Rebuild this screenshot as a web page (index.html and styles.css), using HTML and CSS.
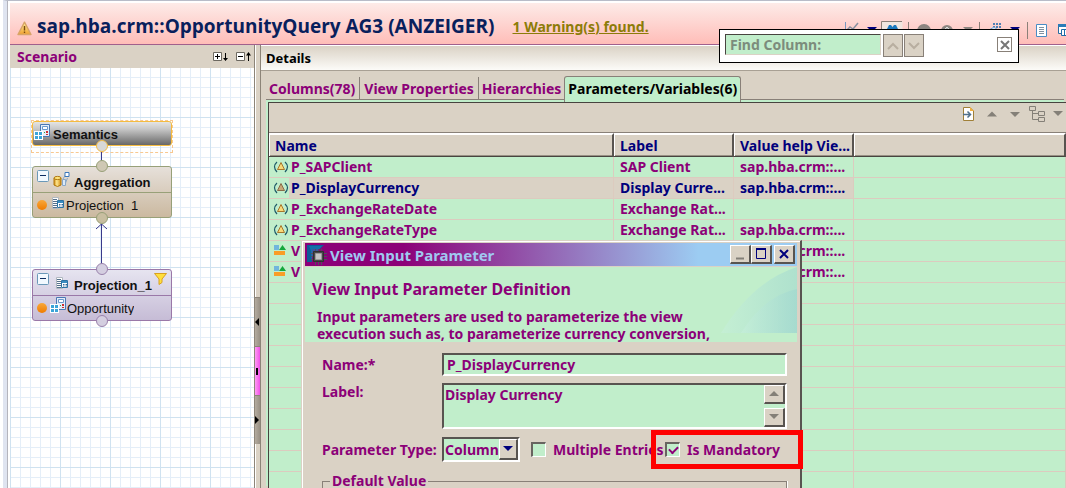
FILE: index.html
```html
<!DOCTYPE html>
<html lang="en">
<head>
  <meta charset="UTF-8">
  <title>sap.hba.crm::OpportunityQuery</title>
  <link rel="stylesheet" href="styles.css">
</head>
<body>
  <!-- shared icons -->
  <svg class="defs" aria-hidden="true">
    <defs>
      <linearGradient id="gold" x1="0" y1="0" x2="0" y2="1">
        <stop offset="0" stop-color="#fff3a0"/>
        <stop offset="1" stop-color="#f0a030"/>
      </linearGradient>
      <linearGradient id="cyl" x1="0" y1="0" x2="1" y2="0">
        <stop offset="0" stop-color="#d08a10"/>
        <stop offset="0.4" stop-color="#ffe890"/>
        <stop offset="1" stop-color="#d08a10"/>
      </linearGradient>
      <symbol id="i-param" viewBox="0 0 16 14">
        <path d="M4 2Q-1 6.500 4 12M12 2Q17 6.500 12 12" fill="none" stroke="#1e5a68" stroke-width="1.200"/>
        <path d="M8 2.500L11.500 9.500H4.500Z" fill="#f8d878" stroke="#a8762a"/>
      </symbol>
      <symbol id="i-param-sel" viewBox="0 0 16 14">
        <path d="M4 2Q-1 6.500 4 12M12 2Q17 6.500 12 12" fill="none" stroke="#1e5a68" stroke-width="1.200"/>
        <path d="M8 2.500L11.500 9.500H4.500Z" fill="#c8a878" stroke="#8a6a48"/>
      </symbol>
      <symbol id="i-var" viewBox="0 0 12 11">
        <path d="M0 0H5V5H0Z" fill="#6fb6dc"/>
        <path d="M8.500 0L12 5H5Z" fill="#14a83c"/>
        <path d="M0 6H11V10H0Z" fill="#f99d27"/>
      </symbol>
      <symbol id="i-cube" viewBox="0 0 16 16">
        <path d="M6.500 .5H15.500V12.500H6.500Z" fill="#e4eefa" stroke="#4a78b4"/>
        <path d="M8.500 2.500H13.500V5.500H8.500Z" fill="#fff" stroke="#6a98cc"/>
        <path d="M10 8h1v1h-1z" fill="#30a040"/>
        <path d="M12 7h2v2h-2zM12 10h2v1h-2z" fill="#d03030"/>
        <path d="M0 7H9V16H0Z" fill="#fff"/>
        <path d="M1 8h3v3h-3zM5 8h3v3h-3zM1 12h3v3h-3zM5 12h3v3h-3z" fill="#3ba4d8"/>
      </symbol>
      <symbol id="i-proj" viewBox="0 0 12 12">
        <path d="M.5 .5H6.500V11.500H.5Z" fill="#fff" stroke="#b0b8c0"/>
        <path d="M1 2.500h4M1 4.500h4M1 6.500h4M1 8.500h4M1 10.500h4" stroke="#56718c"/>
        <path d="M5.500 3.500H11.500V10.500H5.500Z" fill="#fff" stroke="#2c74a4"/>
        <path d="M6 4H11V6H6Z" fill="#3a8cc0"/>
        <path d="M7 7.500h1.500M9.500 7.500h1.500M7 9h1.500M9.500 9h1.500" stroke="#3a6c98"/>
      </symbol>
      <symbol id="i-agg" viewBox="0 0 17 17">
        <path d="M1 7V14Q4.500 17 8 14V7Z" fill="url(#cyl)" stroke="#b07810"/>
        <ellipse cx="4.500" cy="7" rx="3.500" ry="1.600" fill="#ffe47a" stroke="#b07810"/>
        <path d="M9.500 8.500V14.500H12.500V8.500ZM10 8l3-5M12.500 12l2-5" fill="#dbe9f8" stroke="#8aa8c8"/>
        <path d="M12 1.500H16V5.500H12Z" fill="#fff" stroke="#3c78bc"/>
      </symbol>
      <symbol id="i-collapse" viewBox="0 0 12 12">
        <rect x=".5" y=".5" width="11" height="11" rx="1" fill="#f2f9ff" stroke="#6a98b8"/>
        <path d="M3 5.500H9" stroke="#0c2c60"/>
      </symbol>
    </defs>
  </svg>

  <div class="editor">
    <header class="title-bar">
      <svg class="warn" viewBox="0 0 15 15">
        <path d="M7.500 1.200L14 13.500H1Z" fill="url(#gold)" stroke="#d8a468" stroke-linejoin="round" stroke-width="1.400"/>
        <path d="M7.500 5V9.500M7.500 10.500V12" stroke="#7a4a10" stroke-width="1.400"/>
      </svg>
      <h1>sap.hba.crm::OpportunityQuery AG3 (ANZEIGER)</h1>
      <a class="warning-link" href="#">1 Warning(s) found.</a>
      <svg class="tools" width="222" height="20" viewBox="0 0 222 20">
        <path d="M1.500 1V16M1 15.500H15" stroke="#7898c0" fill="none"/>
        <path d="M2 10L6 6L9 8L14 2" stroke="#8890a0" fill="none" stroke-width="1.500"/>
        <path d="M23 6H33L28 11Z" fill="#00007c"/>
        <path d="M37.500 20V-.5H58.500V20" fill="#f1e6df"/>
        <path d="M37.500 20V.5H58" fill="none" stroke="#8c8078"/>
        <path d="M43 16V8L45 4H47L48.500 6L50 4H52L54 8V16H50V9H47V16Z" fill="#1c78bc"/>
        <path d="M64.500 1V18M135.500 1V18M183.500 1V18" stroke="#8c8078"/>
        <circle cx="80" cy="10" r="7" fill="#8c8580"/>
        <circle cx="103" cy="10" r="6" fill="#8c8580"/>
        <path d="M76 9h8M103 6v8M100 9l3-3 3 3" stroke="#ddd" fill="none"/>
        <path d="M119 6H129L124 11Z" fill="#8c8580"/>
        <path d="M149 2h2v2h-2zM152 2h2v2h-2zM155 2h2v2h-2zM149 5h2v2h-2zM152 5h2v2h-2zM155 5h2v2h-2zM155 8h2v2h-2z" fill="#5080b4"/>
        <path d="M145 9l5-3l4 3v6h-9z" stroke="#7aa6d4" fill="#dbe9f8"/>
        <path d="M166 6H176L171 11Z" fill="#00007c"/>
        <path d="M192.500 3.500H202.500V15.500H192.500Z" fill="#fff" stroke="#4a8cc4"/>
        <path d="M195 6.500h5M195 8.500h5M195 10.500h5M195 12.500h5" stroke="#8090a0"/>
        <path d="M214.500 3.500H224V12.500H214.500Z" fill="#fff" stroke="#2a6ca0"/>
        <path d="M214 3H224V6H214Z" fill="#2a7cb8"/>
        <path d="M217.500 8.500h6v6h-6zM220.500 9v5" fill="#fff" stroke="#1c6ca8"/>
      </svg>
    </header>

    <main class="panes">
      <section class="scenario">
        <div class="pane-head">
          <h2>Scenario</h2>
          <svg width="38" height="12" viewBox="0 0 38 12">
            <path d="M.5 1.500H8.500V9.500H.5ZM23.500 1.500H31.500V9.500H23.500Z" fill="#fff" stroke="#6c6860"/>
            <path d="M2 5.500H7M4.500 3V8M25 5.500H30" stroke="#000"/>
            <path d="M12.500 2V9M35.500 3V10" stroke="#000"/>
            <path d="M10 7H15L12.500 10ZM33 4.500H38L35.500 1Z" fill="#000"/>
          </svg>
        </div>
        <div class="canvas">
          <div class="selection"></div>
          <div class="node semantics">
            <div class="node-title"><svg class="ico16"><use href="#i-cube"/></svg>Semantics</div>
          </div>
          <div class="node aggregation">
            <div class="node-title">
              <svg class="collapse"><use href="#i-collapse"/></svg>
              <svg class="ico17"><use href="#i-agg"/></svg>
              <span>Aggregation</span>
            </div>
            <div class="node-row">
              <i class="dot"></i>
              <svg class="ico12"><use href="#i-proj"/></svg>
              <span>Projection_1</span>
            </div>
          </div>
          <div class="node projection">
            <div class="node-title">
              <svg class="collapse"><use href="#i-collapse"/></svg>
              <svg class="ico12"><use href="#i-proj"/></svg>
              <span>Projection_1</span>
              <svg class="filter" viewBox="0 0 13 12">
                <path d="M.5 .5H12.500L8 6V9.500L5 11.500V6Z" fill="#ffdf3c" stroke="#d8a020"/>
              </svg>
            </div>
            <div class="node-row">
              <i class="dot"></i>
              <svg class="ico16"><use href="#i-cube"/></svg>
              <span>Opportunity</span>
            </div>
          </div>
          <svg class="links" width="200" height="280" viewBox="0 0 200 280">
            <path d="M91.500 84V93M91.500 156V196M86 161L91.500 156L97 161" fill="none" stroke="#3a3a8c"/>
            <circle cx="92" cy="78" r="5.500" fill="#d8d8d8" stroke="#f0bc48"/>
            <circle cx="92" cy="98" r="5.500" fill="#cfc8b4" stroke="#98a078"/>
            <circle cx="92" cy="150" r="5.500" fill="#c8bea0" stroke="#98a078"/>
            <circle cx="92" cy="201" r="5.500" fill="#d4cee0" stroke="#9a82ac"/>
            <circle cx="92" cy="253" r="5.500" fill="#d4cee0" stroke="#9a82ac"/>
          </svg>
        </div>
      </section>

      <div class="sash">
        <button class="left" aria-label="Collapse left"></button>
        <button class="mid" aria-label="Reset"></button>
        <button class="right" aria-label="Collapse right"></button>
      </div>

      <section class="details">
        <h2 class="details-head">Details</h2>
        <nav class="tabs">
          <button>Columns(78)</button>
          <button>View Properties</button>
          <button>Hierarchies</button>
          <button class="active">Parameters/Variables(6)</button>
        </nav>
        <div class="tab-body">
          <div class="table-tools">
            <svg width="104" height="18" viewBox="0 0 104 18">
              <path d="M1.500 1.500H8L11.500 5V14.500H1.500Z" fill="#fff" stroke="#a08038"/>
              <path d="M8 1V5H12Z" fill="#f0b040"/>
              <path d="M1 8.500H8M5.500 5.500L8.500 8.500L5.500 11.500" stroke="#50708c" fill="none" stroke-width="1.500"/>
              <path d="M25 10.500H35L30 5.500Z" fill="#848078"/>
              <path d="M48 6H58L53 11Z" fill="#848078"/>
              <path d="M67.500 .5H73.500V4.500H67.500ZM76.500 5.500H82.500V9.500H76.500ZM76.500 11.500H82.500V15.500H76.500ZM70.500 5V13.500H76M70.500 7.500H76" fill="none" stroke="#848078"/>
              <path d="M91 5H101L96 10Z" fill="#848078"/>
            </svg>
          </div>
          <table class="params">
            <colgroup><col class="c-name"><col class="c-label"><col class="c-value"><col></colgroup>
            <thead>
              <tr><th>Name</th><th>Label</th><th>Value help Vie...</th><th></th></tr>
            </thead>
            <tbody>
              <tr><td><svg class="p"><use href="#i-param"/></svg>P_SAPClient</td><td>SAP Client</td><td>sap.hba.crm::...</td><td></td></tr>
              <tr class="selected"><td><svg class="p"><use href="#i-param-sel"/></svg>P_DisplayCurrency</td><td>Display Curre...</td><td>sap.hba.crm::...</td><td></td></tr>
              <tr><td><svg class="p"><use href="#i-param"/></svg>P_ExchangeRateDate</td><td>Exchange Rat...</td><td></td><td></td></tr>
              <tr><td><svg class="p"><use href="#i-param"/></svg>P_ExchangeRateType</td><td>Exchange Rat...</td><td>sap.hba.crm::...</td><td></td></tr>
              <tr><td><svg class="v"><use href="#i-var"/></svg>V</td><td></td><td>sap.hba.crm::...</td><td></td></tr>
              <tr><td><svg class="v"><use href="#i-var"/></svg>V</td><td></td><td>sap.hba.crm::...</td><td></td></tr>
              <tr><td></td><td></td><td></td><td></td></tr>
              <tr><td></td><td></td><td></td><td></td></tr>
              <tr><td></td><td></td><td></td><td></td></tr>
              <tr><td></td><td></td><td></td><td></td></tr>
              <tr><td></td><td></td><td></td><td></td></tr>
              <tr><td></td><td></td><td></td><td></td></tr>
              <tr><td></td><td></td><td></td><td></td></tr>
              <tr><td></td><td></td><td></td><td></td></tr>
              <tr><td></td><td></td><td></td><td></td></tr>
              <tr><td></td><td></td><td></td><td></td></tr>
            </tbody>
          </table>
        </div>
      </section>
    </main>

    <div class="find">
      <input type="text" aria-label="Find column" placeholder="Find Column:">
      <button class="step" aria-label="Previous"><svg width="12" height="8"><path d="M1 7L6 2L11 7" fill="none" stroke="#b8aea0" stroke-width="2"/></svg></button>
      <button class="step" aria-label="Next"><svg width="12" height="8"><path d="M1 1L6 6L11 1" fill="none" stroke="#b8aea0" stroke-width="2"/></svg></button>
      <button class="close" aria-label="Close"><svg width="10" height="10"><path d="M1 1L9 9M9 1L1 9" stroke="#777" stroke-width="2"/></svg></button>
    </div>

    <div class="dialog" role="dialog" aria-labelledby="dlg-title">
      <div class="dlg-bar">
        <svg width="20" height="20" viewBox="0 0 20 20">
          <path d="M0 0H17L13 4H5V17L0 17Z" fill="#0c5c98"/>
          <path d="M2 1H15L4 14V6Z" fill="#1878b0" opacity=".7"/>
          <path d="M8.500 4V20M11.500 4V20M14.500 4V20M4 8.500H20M4 11.500H20M4 14.500H20" stroke="#50505c"/>
          <path d="M6.500 6.500H16.500V16.500H6.500Z" fill="#484848" stroke="#303030"/>
          <path d="M8.500 8.500H14.500V14.500H8.500Z" fill="#c4c4c4" stroke="#999"/>
        </svg>
        <span id="dlg-title">View Input Parameter</span>
        <button aria-label="Minimize"><svg width="12" height="12"><path d="M2 10.500H10" stroke="#848078" stroke-width="2"/></svg></button>
        <button aria-label="Maximize"><svg width="12" height="12"><path d="M1.500 1V10.500H10.500V1" fill="none" stroke="#00007c"/><path d="M1 1H11" stroke="#00007c" stroke-width="2"/></svg></button>
        <button class="dlg-close" aria-label="Close"><svg width="12" height="12"><path d="M2 2L10 10M10 2L2 10" stroke="#00007c" stroke-width="2"/></svg></button>
      </div>
      <div class="dlg-banner">
        <svg class="swoosh" width="76" height="66" viewBox="0 0 76 66">
          <defs>
            <linearGradient id="sw" x1="0" y1="0" x2="1" y2="0">
              <stop offset="0" stop-color="#c8f0dc" stop-opacity=".5"/>
              <stop offset="1" stop-color="#9cd4d0" stop-opacity=".5"/>
            </linearGradient>
          </defs>
          <path d="M0 66Q32 14 76 0V66Z" fill="url(#sw)"/>
          <path d="M20 66Q44 28 76 22V66Z" fill="url(#sw)"/>
        </svg>
        <h3>View Input Parameter Definition</h3>
        <p>Input parameters are used to parameterize the view<br>execution such as, to parameterize currency conversion,</p>
      </div>
      <form class="dlg-form">
        <div class="field">
          <label for="p-name">Name:*</label>
          <input type="text" id="p-name" value="P_DisplayCurrency">
        </div>
        <div class="field top">
          <label for="p-label">Label:</label>
          <div class="area">
            <textarea id="p-label">Display Currency</textarea>
            <div class="spin">
              <button type="button" aria-label="Scroll up"><svg width="10" height="6"><path d="M0 5H10L5 0Z" fill="#848078"/></svg></button>
              <button type="button" aria-label="Scroll down"><svg width="10" height="6"><path d="M0 0H10L5 5Z" fill="#848078"/></svg></button>
            </div>
          </div>
        </div>
        <div class="field last">
          <label for="p-type">Parameter Type:</label>
          <div class="combo">
            <select id="p-type"><option>Column</option></select>
            <span class="arrow"><svg width="10" height="6"><path d="M0 0H10L5 5Z" fill="#00007c"/></svg></span>
          </div>
          <input type="checkbox" id="p-multi">
          <label class="chk multi" for="p-multi">Multiple Entries</label>
          <div class="mandatory">
            <input type="checkbox" id="p-mand" checked>
            <label class="chk" for="p-mand">Is Mandatory</label>
          </div>
        </div>
        <fieldset>
          <legend>Default Value</legend>
        </fieldset>
      </form>
    </div>
  </div>
</body>
</html>
```
FILE: styles.css
```css
* {
  box-sizing: border-box;
}
body {
  margin: 0;
  font: bold 14px/18px "Noto Sans", Tahoma, sans-serif;
  color: #8c0078;
  background: #fff;
  overflow: hidden;
}
h1, h2, h3, p {
  margin: 0;
  font-size: inherit;
}
button, input, textarea, select {
  margin: 0;
  padding: 0;
  font: inherit;
  color: inherit;
  border-radius: 0;
}
svg {
  display: block;
  flex: none;
}
.defs {
  position: absolute;
  width: 0;
  height: 0;
}

/* editor frame */
.editor {
  position: relative;
  display: flex;
  flex-direction: column;
  height: 100vh;
  margin-left: 3px;
  border-left: 4px solid #dfe4f0;
  border-top: 1px solid #b8bcc8;
  padding: 2px 0 0 2px;
  box-shadow: inset 1px 0 #b4b4bc;
  overflow: hidden;
}
.title-bar {
  display: flex;
  align-items: center;
  height: 42px;
  flex: none;
  padding: 4px 0 0 7px;
  margin-left: 1px;
  background: linear-gradient(#fdebe8, #ffbdb8);
  border-bottom: 1px solid #a0608c;
}
.warn {
  width: 15px;
  height: 15px;
  margin: 5px 5px 0 0;
}
.title-bar h1 {
  font: bold 19px/28px "Open Sans", "Segoe UI", sans-serif;
  color: #08205c;
  white-space: nowrap;
}
.warning-link {
  margin: 2px 0 0 18px;
  color: #8c7c08;
  white-space: nowrap;
}
.tools {
  margin: 10px 0 0 auto;
}

.panes {
  display: flex;
  flex: 1;
  min-height: 0;
  margin-left: 1px;
  background: #dad2c5;
}

/* scenario */
.scenario {
  width: 244px;
  flex: none;
  display: flex;
  flex-direction: column;
}
.pane-head {
  display: flex;
  justify-content: space-between;
  align-items: center;
  height: 23px;
  flex: none;
  padding: 0 3px 0 7px;
}
.canvas {
  position: relative;
  flex: 1;
  background-color: #fff;
  background-image:
    linear-gradient(90deg, #cfe2f0 1px, transparent 1px),
    linear-gradient(#cfe2f0 1px, transparent 1px),
    linear-gradient(90deg, #e4eef8 1px, transparent 1px),
    linear-gradient(#e4eef8 1px, transparent 1px);
  background-size: 50px 50px, 50px 50px, 10px 10px, 10px 10px;
  background-position: 0 -1px;
  font: 13px/14px "Liberation Sans", Arial, sans-serif;
  color: #111;
}
.selection {
  position: absolute;
  left: 21px;
  top: 52px;
  width: 142px;
  height: 33px;
  border: 1px dashed #f8c890;
}
.node {
  position: absolute;
  left: 22px;
  width: 140px;
  border: 1px solid;
  border-radius: 3px;
}
.semantics {
  top: 53px;
  height: 25px;
  border-color: #f4bc40;
  background: linear-gradient(#e4e4e4, #c8c8c8 30%, #686868);
}
.aggregation {
  top: 98px;
  height: 52px;
  border-color: #98a078;
  background: linear-gradient(#e6e0da, #cbb9a0);
}
.projection {
  top: 201px;
  height: 52px;
  border-color: #9a78a8;
  background: linear-gradient(#e6e4f0, #c6bcd6);
}
.node-title {
  display: flex;
  height: 25px;
  padding: 3px 4px;
  font-weight: bold;
}
.node-title span {
  padding-top: 6px;
}
.semantics .node-title {
  padding: 2px 1px;
  gap: 3px;
  line-height: 21px;
}
.node-row {
  display: flex;
  align-items: center;
  height: 25px;
  padding-left: 4px;
  border-top: 1px solid;
  border-color: inherit;
}
.node-row span {
  height: 13px;
  overflow: hidden;
}
.ico16 {
  width: 16px;
  height: 16px;
}
.ico17 {
  width: 17px;
  height: 17px;
  margin: 1px 4px 0 4px;
}
.ico12 {
  width: 12px;
  height: 12px;
  margin: 4px 6px 0 7px;
}
.node-row .ico12 {
  margin: 0 2px 5px 5px;
}
.node-row .ico16 {
  margin: 0 1px 6px 3px;
}
.collapse {
  width: 12px;
  height: 12px;
}
.filter {
  width: 13px;
  height: 12px;
  margin-left: 2px;
}
.dot {
  width: 10px;
  height: 10px;
  border-radius: 50%;
  background: linear-gradient(#f8a83c, #f07c00);
}
.links {
  position: absolute;
  left: 0;
  top: 0;
}

/* sash */
.sash {
  width: 7px;
  flex: none;
  display: flex;
  flex-direction: column;
  justify-content: flex-start;
  padding-top: 252px;
  border: solid #8c8478;
  border-width: 0 1px;
  background: linear-gradient(90deg, #fff 1px, #dad2c5 1px);
}
.sash button {
  display: flex;
  align-items: center;
  height: 49px;
  border: 0;
  border-top: 1px solid #8c8478;
  background: linear-gradient(90deg, #b4aca0, #989084);
}
.sash .mid {
  background: linear-gradient(90deg, #ff9cf4, #f050e8);
}
.sash .left::before,
.sash .right::before {
  content: "";
  border: 4px solid transparent;
  border-left-width: 0;
  border-right: 4px solid #000;
}
.sash .right::before {
  border-left: 4px solid #000;
  border-right-width: 0;
}
.sash .mid::before {
  content: "";
  width: 2px;
  height: 7px;
  margin-left: 1px;
  background: #000;
}

/* details */
.details {
  flex: 1;
  min-width: 0;
  display: flex;
  flex-direction: column;
}
.details-head {
  height: 26px;
  flex: none;
  padding: 3px 5px;
  font-size: 13px;
  color: #000;
  background: linear-gradient(#dad2c5, #fcfbf8);
  border-top: 1px solid #fff;
  border-bottom: 1px solid #a8a094;
}
.tabs {
  display: flex;
  align-items: flex-end;
  height: 29px;
  flex: none;
  padding: 0 4px;
}
.tabs button {
  height: 23px;
  padding: 0 4px;
  color: #8c0078;
  background: none;
  border: 0;
  border-right: 1px solid #888078;
  white-space: nowrap;
}
.tabs button:nth-child(3) {
  padding: 0 3px;
  border-right: 0;
}
.tabs .active {
  position: relative;
  z-index: 1;
  height: 26px;
  margin-bottom: -2px;
  padding: 0 3px 2px;
  color: #000;
  background: #c1eecb;
  border: 1px solid #888078;
  border-bottom: 0;
  border-radius: 3px 3px 0 0;
}
.tab-body {
  flex: 1;
  min-height: 0;
  margin: 2px 0 0 7px;
  border-top: 1px solid #484440;
  border-left: 1px solid #484440;
  box-shadow: -2px -2px #c1eecb, -2px -3px #888078;
  overflow: hidden;
}
.table-tools {
  display: flex;
  justify-content: flex-end;
  height: 30px;
  padding: 3px 0 0;
  border-bottom: 1px solid #888078;
}
.params {
  width: 100%;
  table-layout: fixed;
  border-collapse: separate;
  border-spacing: 0;
  background: #c1eecb;
}
.c-name {
  width: 345px;
}
.c-label,
.c-value {
  width: 120px;
}
.params th {
  height: 24px;
  padding: 0 6px;
  text-align: left;
  color: #00007c;
  background: #dad2c5;
  border-top: 2px solid #fff;
  border-right: 2px solid #585450;
  border-bottom: 1px solid #484440;
  box-shadow: inset 1px 0 #fff, inset 0 -1px #989084;
  white-space: nowrap;
}
.params td {
  height: 21px;
  padding: 0 6px;
  line-height: 18px;
  border-right: 1px solid #dccbbf;
  border-bottom: 1px solid #dccbbf;
  white-space: nowrap;
}
.params td:first-child {
  padding-left: 22px;
}
.params td svg {
  float: left;
  width: 16px;
  height: 14px;
  margin: 2px 0 0 -18px;
}
.params td svg.v {
  width: 12px;
  height: 11px;
  margin: 3px 0 0 -17px;
}
.selected td {
  color: #00007c;
  background: #dad2c5;
}
.selected td:first-child {
  background: linear-gradient(90deg, #c1eecb 20px, #dad2c5 20px);
}
.selected td:last-child {
  background: none;
}

/* find popup */
.find {
  position: absolute;
  top: 28px;
  right: 47px;
  display: flex;
  align-items: flex-start;
  width: 300px;
  height: 34px;
  padding: 4px 5px;
  background: #fff;
  border: 1px solid #000;
}
.find input {
  width: 156px;
  height: 21px;
  padding: 0 4px;
  background: #c1eecb;
  border: 1px solid #dad2c5;
  border-top: 1px solid #484440;
  border-left: 1px solid #484440;
}
.find input::placeholder {
  color: #7c8c7c;
  opacity: 1;
}
.step,
.close {
  display: flex;
  align-items: center;
  justify-content: center;
  width: 20px;
  height: 23px;
  margin-left: 1px;
  background: #dad2c5;
  border: 1px solid #888078;
}
.find input + .step {
  margin-left: 2px;
}
.find .close {
  width: 15px;
  height: 15px;
  margin: 3px 1px 0 auto;
  background: #fff;
}

/* dialog */
.dialog {
  position: absolute;
  left: 294px;
  top: 239px;
  width: 501px;
  height: 300px;
  padding: 2px;
  background: #dad2c5;
  border: 1px solid #dad2c5;
  border-right: 2px solid #585450;
  box-shadow: inset 1px 1px #fff;
}
.dlg-bar {
  display: flex;
  align-items: center;
  height: 23px;
  margin: 0 1px;
  padding: 0 2px;
  color: #a0c8f0;
  background: linear-gradient(90deg, #8c0078 20%, #9cccf2 80%);
}
.dlg-bar span {
  flex: 1;
  margin-left: 3px;
  font-size: 15px;
}
.dlg-bar button,
.spin button,
.arrow {
  display: flex;
  align-items: center;
  justify-content: center;
  width: 21px;
  height: 19px;
  background: #dad2c5;
  border: 1px solid #fff;
  border-right: 2px solid #585450;
  border-bottom: 2px solid #585450;
}
.dlg-bar .dlg-close {
  margin-left: 2px;
}
.dlg-banner {
  position: relative;
  height: 75px;
  margin: 1px 1px 0;
  padding: 11px 7px 0;
  background: #c1eecb;
}
.swoosh {
  position: absolute;
  right: 0;
  top: 0;
}
.dlg-banner h3 {
  position: relative;
  font-size: 16px;
  line-height: 22px;
}
.dlg-banner p {
  position: relative;
  margin: 8px 0 0 5px;
  line-height: 17px;
  white-space: nowrap;
}
.dlg-form {
  padding: 11px 11px 0 18px;
}
.field {
  display: flex;
  align-items: center;
  margin-bottom: 7px;
}
.field.top {
  align-items: flex-start;
}
.field.last {
  margin: 8px 0 10px;
}
.field > label:first-child {
  width: 120px;
  flex: none;
  white-space: nowrap;
}
.dlg-form input[type="text"],
.area,
.combo {
  background: #c1eecb;
  border: 2px solid #fff;
  border-top-color: #585450;
  border-left-color: #585450;
}
.dlg-form input[type="text"] {
  flex: 1;
  height: 23px;
  padding: 0 3px;
}
.area {
  display: flex;
  flex: 1;
  height: 46px;
}
.area textarea {
  flex: 1;
  padding: 1px;
  background: none;
  border: 0;
  resize: none;
  overflow: hidden;
}
.spin {
  display: flex;
  flex-direction: column;
  justify-content: space-between;
}
.combo {
  position: relative;
  width: 78px;
  height: 25px;
  flex: none;
}
.combo select {
  width: 100%;
  height: 21px;
  padding-left: 1px;
  appearance: none;
  background: none;
  border: 0;
}
.combo .arrow {
  position: absolute;
  top: 0;
  right: 0;
  width: 19px;
  height: 21px;
  pointer-events: none;
}
.dlg-form input[type="checkbox"] {
  display: grid;
  place-items: center;
  width: 15px;
  height: 15px;
  flex: none;
  appearance: none;
  background: #c1eecb;
  border: 1px solid #fff;
  border-top: 2px solid #686460;
  border-left: 2px solid #686460;
}
.dlg-form input[type="checkbox"]:checked::before {
  content: "";
  width: 7px;
  height: 4px;
  margin-bottom: 2px;
  border: solid #8c0078;
  border-width: 0 0 2px 2px;
  rotate: -45deg;
}
#p-multi {
  margin-left: 11px;
}
.chk {
  margin-left: 7px;
  white-space: nowrap;
}
.multi {
  width: 98px;
  flex: none;
}
/* callout around the mandatory flag */
.mandatory {
  display: flex;
  align-items: center;
  width: 152px;
  height: 39px;
  flex: none;
  margin: -7px -30px -7px 0;
  padding-left: 9px;
  position: relative;
  border: 5px solid #fe0000;
}
fieldset {
  height: 60px;
  margin: 0;
  padding: 0 7px;
  border: 1px solid #888078;
  box-shadow: 1px 0 #fff;
}
legend {
  padding: 0 2px;
}
```
